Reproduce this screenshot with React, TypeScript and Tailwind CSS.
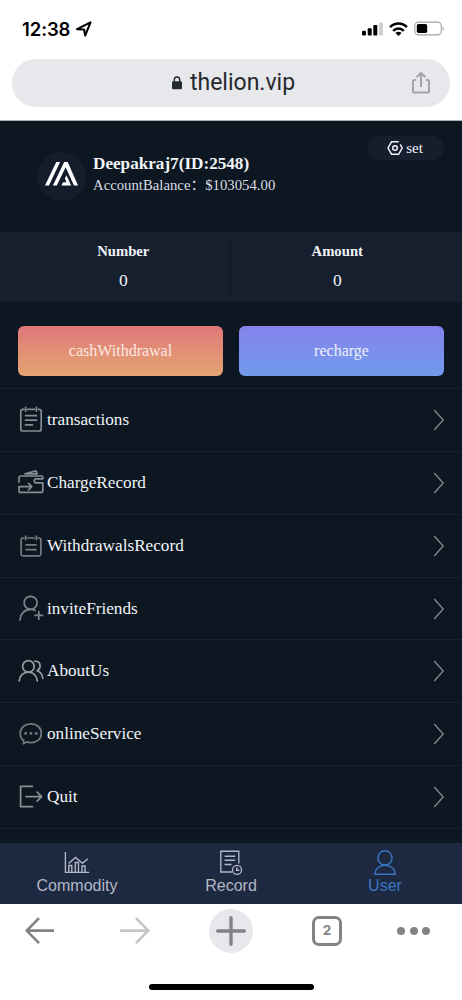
import React from 'react';

type IconProps = { className?: string };

const Icon: React.FC<IconProps & { children: React.ReactNode }> = ({ className, children }) => (
  <svg
    className={className ?? 'w-[26px] h-[28px]'}
    viewBox="0 0 26 28"
    fill="none"
    stroke="currentColor"
    strokeWidth="1.7"
    strokeLinecap="round"
    strokeLinejoin="round"
  >
    {children}
  </svg>
);

const TransactionsIcon = () => (
  <Icon>
    <path d="M5.600 3.400H4.800a2 2 0 0 0-2 2V23a2 2 0 0 0 2 2h16.400a2 2 0 0 0 2-2V5.400a2 2 0 0 0-2-2h-.7M9.600 3.400h6.800M7.600 1.300v3.800M18.400 1.300v3.800M7.500 9.700h11M7.500 14.200h11M7.500 18.900h7" />
  </Icon>
);

const ChargeIcon = () => (
  <Icon>
    <path d="M1 13V8.700A1.700 1.700 0 0 1 2.700 7h20.800a1.300 1.300 0 0 1 1.300 1.300v1.500h-6.500a2 2 0 0 0 0 4h6.500v7.900a1.700 1.700 0 0 1-1.700 1.700H2.700A1.700 1.700 0 0 1 1 21.700v-4.100h12.500M10.500 14.300l3.300 3.300-3.300 3.300M7 4.800l11-2.900 1.200 2.900z" />
  </Icon>
);

const WithdrawalsIcon = () => (
  <Icon>
    <path d="M5.600 6H4.900a1.800 1.800 0 0 0-1.800 1.800V22a1.800 1.800 0 0 0 1.800 1.800h16.200a1.800 1.800 0 0 0 1.800-1.800V7.800A1.800 1.800 0 0 0 21.100 6h-.7M9.600 6h6.800M7.600 4v3.600M18.400 4v3.600M8 12.800h10M8 17.600h10" />
  </Icon>
);

const InviteIcon = () => (
  <Icon>
    <circle cx="12.600" cy="7.800" r="6.500" />
    <path d="M1.900 25c.4-6 4.800-10.600 10.700-10.600 1.800 0 3.300.3 4.600 1M20.800 16.600v7.600M17 20.400h7.600" />
  </Icon>
);

const AboutIcon = () => (
  <Icon>
    <circle cx="10.400" cy="9.400" r="5.800" />
    <path d="M1.200 24c.4-5 4-8.800 9.200-8.800s8.600 3.800 8.900 8.800M16.800 4.300c3.400-.4 5.300 1.600 5.300 4.800 0 2.200-1.200 3.900-3.100 4.600 3.300 1 5.500 3.700 5.800 7.800" />
  </Icon>
);

const ServiceIcon = () => (
  <Icon>
    <path d="M5.700 20.500C3.300 18.700 2.200 16.200 2.200 13.400 2.200 7.800 6.900 3.800 12.900 3.800s10.400 4 10.400 9.600-4.400 9.200-10.400 9.200c-1.500 0-2.900-.2-4.200-.7L5.500 23.900z" />
    <path d="M7.600 13.400h.1M12.900 13.400h.1M18.200 13.400h.1" strokeWidth="2.800" />
  </Icon>
);

const QuitIcon = () => (
  <Icon>
    <path d="M14.500 3.300H2.600v20.400h11.900M8 13.600h15.500M19.100 9.100l4.500 4.500-4.500 4.500" />
  </Icon>
);

const ChevronIcon = () => (
  <svg className="w-[12px] h-[22px]" viewBox="0 0 12 22" fill="none" stroke="#838a90" strokeWidth="1.300">
    <path d="M1.200 1l9 10-9 10" />
  </svg>
);

const CommodityIcon = () => (
  <svg className="w-[26px] h-[24px]" viewBox="0 0 26 24" fill="none" stroke="currentColor" strokeWidth="1.350">
    <path d="M1.400 1v20.400h23.800M4.800 21V14.500h3V21M11.300 21V11.500h3.200V21M18 21V15h3V21" />
    <path d="M4.600 12.500l6.900-6.100 6.900 5.900 5.500-4.600" />
  </svg>
);

const RecordIcon = () => (
  <svg className="w-[26px] h-[26px]" viewBox="0 0 26 26" fill="none" stroke="currentColor" strokeWidth="1.350">
    <path d="M14 22H2.800V1.200h18v12.300M6.600 6.200h10.600M6.600 10.200h10.600M6.600 14.500h7" />
    <circle cx="19" cy="19.900" r="4.500" />
    <path d="M18.700 17.200v3h2.600" />
  </svg>
);

const UserIcon = () => (
  <svg className="w-[26px] h-[26px]" viewBox="0 0 26 26" fill="none" stroke="currentColor" strokeWidth="1.400">
    <circle cx="13" cy="7.900" r="7.100" />
    <path d="M2.600 24.200c.4-5.300 4.800-9 10.400-9s10.100 3.700 10.500 9z" strokeLinejoin="round" />
  </svg>
);

const menuItems = [
  { label: 'transactions', icon: TransactionsIcon, color: 'text-[#858c93]' },
  { label: 'ChargeRecord', icon: ChargeIcon, color: 'text-[#858c93]' },
  { label: 'WithdrawalsRecord', icon: WithdrawalsIcon, color: 'text-[#747b82]' },
  { label: 'inviteFriends', icon: InviteIcon, color: 'text-[#7f858c]' },
  { label: 'AboutUs', icon: AboutIcon, color: 'text-[#9a9ea5]' },
  { label: 'onlineService', icon: ServiceIcon, color: 'text-[#747a81]' },
  { label: 'Quit', icon: QuitIcon, color: 'text-[#8c9096]' }
];

const tabs = [
  { label: 'Commodity', icon: CommodityIcon, color: 'text-[#b3b9c6]' },
  { label: 'Record', icon: RecordIcon, color: 'text-[#b3b9c6]' },
  { label: 'User', icon: UserIcon, color: 'text-[#3b78c4]' }
];

const stats = [
  { label: 'Number', value: '0' },
  { label: 'Amount', value: '0' }
];

const StatusBar = () => (
  <div className="flex h-[59px] items-center justify-between pl-[22px] pr-[17px] text-black">
    <div className="flex items-center gap-[6px] pb-[2px]">
      <span className="font-['Inter'] text-[18.5px] font-semibold leading-[20px] tracking-[-0.100px]">12:38</span>
      <svg className="h-[16px] w-[16px]" viewBox="0 0 15 15" fill="none" stroke="currentColor" strokeWidth="1.900" strokeLinejoin="round">
        <path d="M1 7.700L13.600 1.300 8.600 13.700 7.600 8z" />
      </svg>
    </div>
    <div className="flex items-center pb-[2px]">
      <svg className="h-[14px] w-[22px]" viewBox="0 0 22 14" fill="currentColor">
        <rect x="0" y="8.800" width="4" height="4.600" rx="1" />
        <rect x="5.700" y="6.200" width="4" height="7.200" rx="1" />
        <rect x="11.300" y="3" width="4" height="10.400" rx="1" />
        <rect x="17" y="0.500" width="4" height="12.900" rx="1" fill="#cfcfcf" />
      </svg>
      <svg className="ml-[5px] h-[14px] w-[19px]" viewBox="0 0 19 14" fill="none" stroke="currentColor" strokeWidth="2.600">
        <path d="M1.100 5.200c4.800-4.900 12-4.900 16.800 0M4.200 8.800c3-3 7.600-3 10.600 0" />
        <path d="M6.400 10.900c1.700-1.700 4.500-1.700 6.200 0L9.500 14z" fill="currentColor" stroke="none" />
      </svg>
      <svg className="ml-[6px] h-[15px] w-[31px]" viewBox="0 0 31 15" fill="none">
        <rect x="0.800" y="1.100" width="26.500" height="12.800" rx="3.800" stroke="#a3a3a3" strokeWidth="1.100" />
        <rect x="2.800" y="3" width="10.400" height="9" rx="1.800" fill="#000" />
        <path d="M28.700 5.500c1.700.8 1.700 3.200 0 4z" fill="#a3a3a3" />
      </svg>
    </div>
  </div>
);

const AddressBar = () => (
  <div className="mx-[12px] grid h-[48px] grid-cols-[1fr_auto_1fr] items-center rounded-full bg-[#e7e8eb] pl-[4px] pr-[19px]">
    <span />
    <div className="flex items-center gap-[8px] pl-[20px]">
      <svg className="h-[14px] w-[10px]" viewBox="0 0 10 14" fill="none">
        <path d="M2.300 6V3.700a2.700 2.700 0 0 1 5.400 0V6" stroke="#25282d" strokeWidth="1.400" />
        <rect x="0" y="5.300" width="10" height="8" rx="1.300" fill="#25282d" />
      </svg>
      <span className="font-['Roboto'] text-[23px] leading-[28px] text-[#25282d]">thelion.vip</span>
    </div>
    <svg className="mb-[1px] h-[24px] w-[20px] justify-self-end" viewBox="0 0 20 24" fill="none" stroke="#a3a5a8" strokeWidth="2.100">
      <path d="M5.200 9H3.500A1.500 1.500 0 0 0 2 10.500V20a1.500 1.500 0 0 0 1.500 1.500h13A1.500 1.500 0 0 0 18 20v-9.500A1.500 1.500 0 0 0 16.500 9h-1.700M10 16V2.500M5.500 6.300L10 1.900l4.500 4.400" />
    </svg>
  </div>
);

const BrowserToolbar = () => (
  <div className="h-[96px] bg-white text-[#828385]">
    <div className="flex h-[54px] items-center pl-[25px] pr-[32px]">
      <svg className="h-[28px] w-[30px]" viewBox="0 0 30 28" fill="none" stroke="currentColor" strokeWidth="2.700">
        <path d="M29 13.600H2M14 1.100L1.700 13.600 14 26.100" />
      </svg>
      <svg className="ml-[65px] h-[28px] w-[30px]" viewBox="0 0 30 28" fill="none" stroke="#c6c6c7" strokeWidth="2.700">
        <path d="M0 13.600h28M16 1.100l12.300 12.500L16 26.100" />
      </svg>
      <div className="ml-[59px] flex h-[44px] w-[44px] items-center justify-center rounded-full bg-[#e7e8eb]">
        <svg className="h-[30px] w-[30px]" viewBox="0 0 30 30" fill="none" stroke="currentColor" strokeWidth="3.400" strokeLinecap="round">
          <path d="M15 1.700v26.600M1.700 15h26.600" />
        </svg>
      </div>
      <div className="ml-[59px] flex h-[30px] w-[30px] items-center justify-center rounded-[7px] border-[3px] border-[#828385] font-['Inter'] text-[13.500px] font-bold leading-none">
        2
      </div>
      <div className="ml-auto flex gap-[4.500px]">
        <span className="h-[8px] w-[8px] rounded-full bg-[#828385]" />
        <span className="h-[8px] w-[8px] rounded-full bg-[#828385]" />
        <span className="h-[8px] w-[8px] rounded-full bg-[#828385]" />
      </div>
    </div>
    <div className="mx-auto mt-[26px] h-[6px] w-[165px] rounded-full bg-black" />
  </div>
);

const App: React.FC = () => {
  return (
    <div className="flex h-[1000px] w-[462px] flex-col overflow-hidden bg-white">
      {/* Browser header */}
      <div className="h-[121px] shrink-0 border-b border-[#a9b1b5]">
        <StatusBar />
        <AddressBar />
      </div>

      <div className="flex h-[783px] shrink-0 flex-col bg-[#0d1721] font-['Liberation_Serif','Noto_Sans_CJK_SC',serif] text-[#f1f4f8]">
        {/* Profile */}
        <div className="flex h-[111px] shrink-0 items-start justify-between pl-[37px] pr-[18px]">
          <div className="flex items-start gap-[7px] pt-[31px]">
            <div className="flex h-[49px] w-[49px] items-center justify-center rounded-full bg-[#151c2c]">
              <svg className="mb-[6px] h-[24px] w-[33px]" viewBox="0 0 33 24" fill="#fff">
                <path d="M0 23.500L11.300 0h3.800L3.900 23.500zM7.900 23.500L19.200 0h3.500L33 23.500h-4L20.600 5.200 11.800 23.500z" />
                <path d="M16.500 23.500l1.500-3.200h3.500l-1.600-3.900 1.500-3.200 4.800 10.300z" />
              </svg>
            </div>
            <div className="pt-[2px]">
              <p className="text-[17.150px] font-bold leading-[20px]">Deepakraj7(ID:2548)</p>
              <p className="mt-[1px] whitespace-nowrap text-[14.750px] leading-[20px] text-[#d9dde2]">AccountBalance：$103054.00</p>
            </div>
          </div>
          <div className="mt-[15px] flex h-[24px] w-[76px] items-center justify-center gap-[3px] rounded-full bg-[#161e2e] pr-[2px]">
            <svg className="h-[16px] w-[16px]" viewBox="0 0 16 16" fill="none" stroke="currentColor" strokeWidth="1.500" strokeLinejoin="round">
              <path d="M11.700 1.700H4.600L1 8l3.600 6.300h7L15.200 8l-2-3.600" />
              <circle cx="8" cy="8" r="2.300" />
            </svg>
            <span className="text-[15px] leading-[20px]">set</span>
          </div>
        </div>

        {/* Totals */}
        <div className="flex h-[70px] shrink-0 items-center bg-[#161f2e] px-[17px]">
          {stats.map((stat, index) => (
            <div
              key={stat.label}
              className={`flex h-[51px] w-[213.500px] shrink-0 flex-col items-center ${index === 0 ? 'border-r border-[#0e1621]' : ''}`}
            >
              <span className="text-[14.700px] font-bold leading-[18px]">{stat.label}</span>
              <span className="mt-[10px] text-[17.500px] leading-[20px]">{stat.value}</span>
            </div>
          ))}
        </div>

        {/* Actions */}
        <div className="grid h-[86px] shrink-0 grid-cols-2 gap-[16px] px-[18px] pt-[24px] text-[16px]">
          <button className="h-[50px] rounded-[6px] bg-linear-to-b from-[#df7779] to-[#e4a570] text-[#fae9e2]">cashWithdrawal</button>
          <button className="h-[50px] rounded-[6px] bg-linear-to-b from-[#8582eb] to-[#709aeb] text-[#edf1fd]">recharge</button>
        </div>

        {/* Menu */}
        <div className="h-[455px] shrink-0 overflow-hidden">
          {menuItems.map((item) => (
            <div
              key={item.label}
              className="flex h-[62.860px] items-center border-t border-[#18222c] pl-[18px] pr-[17px]"
            >
              <span className={item.color}>
                <item.icon />
              </span>
              <span className="ml-[3px] text-[17.200px] leading-[22px]">{item.label}</span>
              <span className="ml-auto">
                <ChevronIcon />
              </span>
            </div>
          ))}
          <div className="border-t border-[#18222c]" />
        </div>

        {/* Bottom tabs */}
        <div className="mt-auto grid h-[62px] shrink-0 grid-cols-3 bg-[#1d2841] font-['Liberation_Sans',sans-serif]">
          {tabs.map((tab) => (
            <div key={tab.label} className={`flex flex-col items-center pt-[7px] ${tab.color}`}>
              <div className="flex h-[26px] items-center">
                <tab.icon />
              </div>
              <span className="text-[16px] leading-[20px]">{tab.label}</span>
            </div>
          ))}
        </div>
      </div>

      <BrowserToolbar />
    </div>
  );
};

export default App;
